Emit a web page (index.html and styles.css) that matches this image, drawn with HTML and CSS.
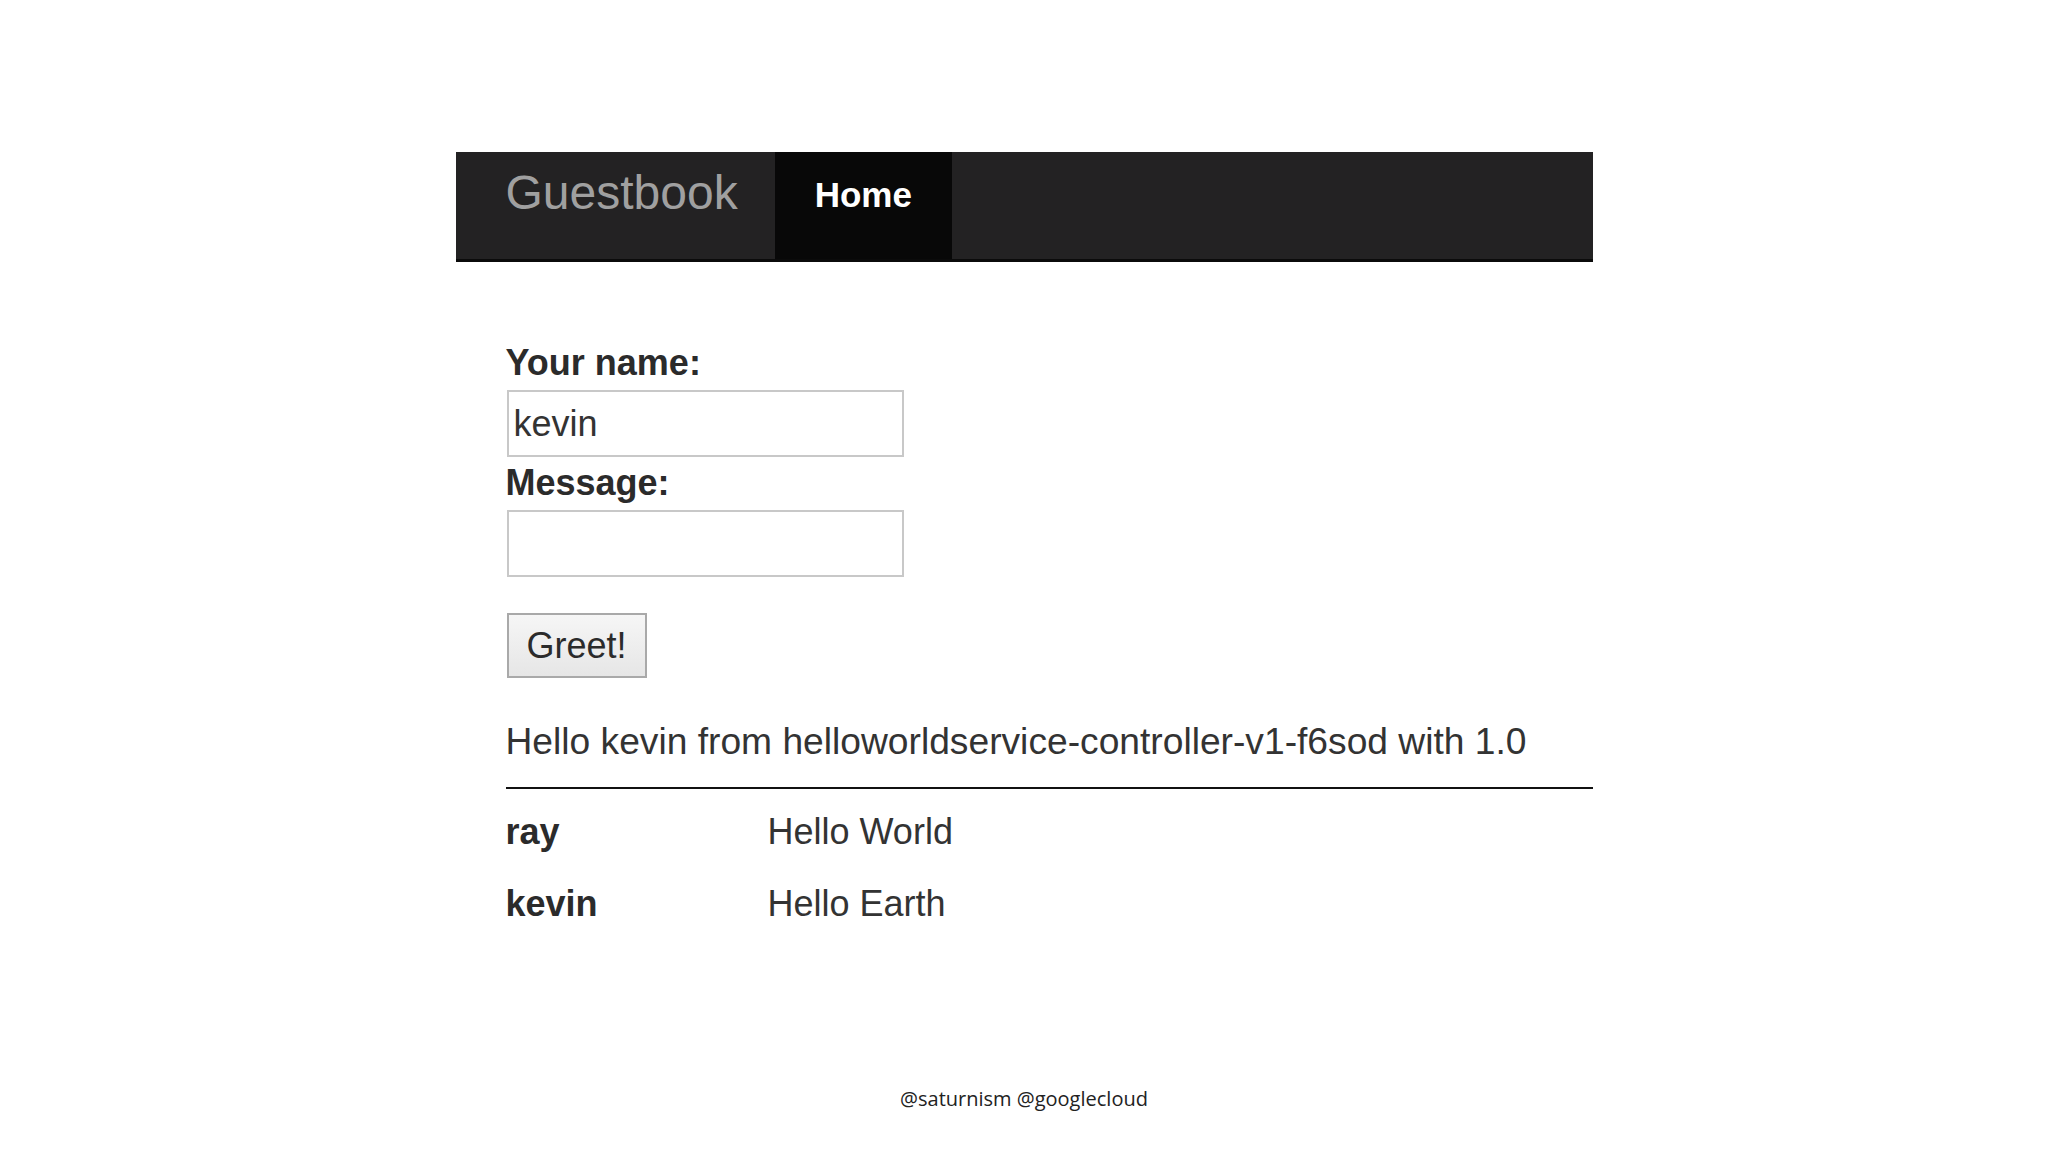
FILE: index.html
```html
<!DOCTYPE html>
<html lang="en">

<head>
    <meta charset="UTF-8">
    <meta name="viewport" content="width=device-width, initial-scale=1.0">
    <title>Guestbook</title>
    <link rel="stylesheet" href="styles.css">
</head>

<body>
    <div class="page">
        <div class="navbar">
            <a class="brand" href="#">Guestbook</a>
            <a class="nav-item active" href="#">Home</a>
        </div>

        <div class="content">
            <form class="greet-form">
                <label for="name">Your name:</label>
                <input type="text" id="name" value="kevin">
                <label for="message">Message:</label>
                <input type="text" id="message">
                <button type="button" class="btn">Greet!</button>
            </form>

            <p class="result">Hello kevin from helloworldservice-controller-v1-f6sod with 1.0</p>
            <hr>

            <div class="entries">
                <div class="entry-name">ray</div>
                <div class="entry-msg">Hello World</div>
                <div class="entry-name">kevin</div>
                <div class="entry-msg">Hello Earth</div>
            </div>
        </div>
    </div>

    <footer>@saturnism @googlecloud</footer>
</body>

</html>
```

FILE: styles.css
```css
body {
    font-family: "Liberation Sans", Arial, sans-serif;
    margin: 0;
    padding: 0;
    background-color: #fff;
    color: #333;
    min-height: 100vh;
    display: flex;
    flex-direction: column;
}

.page {
    flex: 1;
    width: 1137px;
    margin: 0 auto;
    padding-top: 152px;
}

.navbar {
    display: flex;
    height: 107px;
    background-color: #232223;
    border-bottom: 3px solid #0b0b0b;
}

.navbar a {
    text-decoration: none;
}

.brand {
    padding: 17px 37px 0 50px;
    font-size: 48px;
    line-height: 48px;
    color: #a0a0a0;
}

.nav-item {
    padding: 25px 40px 0 40px;
    font-size: 35px;
    font-weight: bold;
    line-height: 35px;
    color: #fff;
}

.nav-item.active {
    background-color: #080808;
}

.content {
    padding: 81px 0 0 50px;
}

.greet-form label {
    display: block;
    font-size: 36px;
    font-weight: bold;
    line-height: 40px;
    color: #2b2b2b;
    margin-bottom: 7px;
}

.greet-form input {
    display: block;
    box-sizing: border-box;
    width: 397px;
    height: 67px;
    margin: 0 0 6px 1px;
    padding: 0 5px;
    border: 2px solid #c8c8c8;
    font-family: "Liberation Sans", Arial, sans-serif;
    font-size: 36px;
    color: #333;
    background: #fff;
}

.btn {
    display: block;
    box-sizing: border-box;
    width: 140px;
    height: 65px;
    margin: 36px 0 0 1px;
    padding: 0 18px;
    border: 2px solid #a9a9a9;
    background: linear-gradient(#f6f6f6, #e6e6e6);
    font-family: "Liberation Sans", Arial, sans-serif;
    font-size: 36px;
    color: #2b2b2b;
    text-align: left;
    cursor: pointer;
}

.result {
    margin: 42px 0 0;
    font-size: 37.2px;
    line-height: 42px;
}

hr {
    margin: 25px 0 7px;
    border: none;
    height: 2px;
    background-color: #111;
}

.entries {
    display: grid;
    grid-template-columns: 262px auto;
    justify-content: start;
    font-size: 36px;
    line-height: 72px;
}

.entry-name {
    font-weight: bold;
    color: #2b2b2b;
}

footer {
    padding-bottom: 40px;
    text-align: center;
    font-family: "Open Sans", sans-serif;
    font-size: 20px;
    line-height: 27px;
    color: #222;
}
```
